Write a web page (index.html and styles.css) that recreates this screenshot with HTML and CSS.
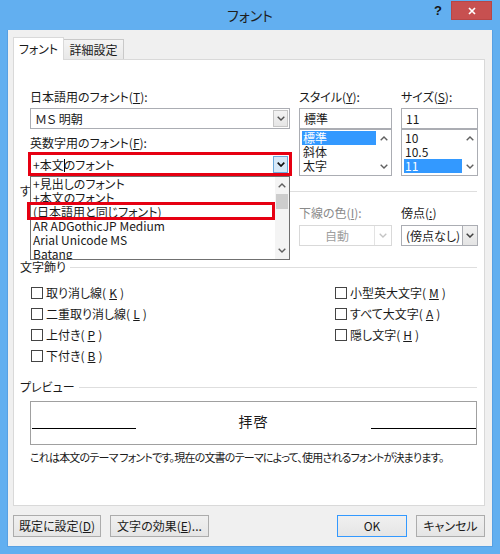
FILE: index.html
```html
<!DOCTYPE html>
<html lang="ja">
<head>
<meta charset="utf-8">
<title>フォント</title>
<link rel="stylesheet" href="styles.css">
</head>
<body>
<div class="window">
  <div class="titlebar">
    <div></div>
    <div class="title">フォント</div>
    <div class="tb-controls">
      <span class="help">?</span>
      <span class="close"><svg width="8" height="8" viewBox="0 0 8 8"><path d="M1 1 L7 7 M7 1 L1 7" stroke="#fff" stroke-width="1.7" fill="none"/></svg></span>
    </div>
  </div>
  <div class="client">
    <div class="tabs">
      <div class="tab active">フォント</div>
      <div class="tab inactive">詳細設定</div>
    </div>
    <div class="panel">
      <div class="fonts">
        <div class="col">
          <div class="lbl">日本語用のフォント(<u>T</u>):</div>
          <div class="combo">
            <div class="val">ＭＳ 明朝</div>
            <div class="arr"><svg width="8" height="5" viewBox="0 0 8 5"><polyline points="0.7,0.7 4,4 7.3,0.7" fill="none" stroke="#505050" stroke-width="1.4"/></svg></div>
          </div>
          <div class="lbl lbl2">英数字用のフォント(<u>F</u>):</div>
          <div class="combo focus">
            <div class="val">+本文<span class="caret"></span>のフォント</div>
            <div class="arr"><svg width="8" height="5" viewBox="0 0 8 5"><polyline points="0.7,0.7 4,4 7.3,0.7" fill="none" stroke="#111" stroke-width="1.7"/></svg></div>
            <div class="redmark rm1"></div>
            <div class="dropdown">
              <div class="items">
                <div class="item">+見出しのフォント</div>
                <div class="item">+本文のフォント</div>
                <div class="item">(日本語用と同じフォント)</div>
                <div class="item">AR ADGothicJP Medium</div>
                <div class="item">Arial Unicode MS</div>
                <div class="item">Batang</div>
              </div>
              <div class="sb">
                <div class="sbtn"><svg width="8" height="5" viewBox="0 0 8 5"><polyline points="0.7,4.3 4,1 7.3,4.3" fill="none" stroke="#606060" stroke-width="1.4"/></svg></div>
                <div class="thumb"></div>
                <div class="track"></div>
                <div class="sbtn"><svg width="8" height="5" viewBox="0 0 8 5"><polyline points="0.7,0.7 4,4 7.3,0.7" fill="none" stroke="#606060" stroke-width="1.4"/></svg></div>
              </div>
              <div class="redmark rm2"></div>
            </div>
          </div>
        </div>
        <div class="col">
          <div class="lbl">スタイル(<u>Y</u>):</div>
          <div class="combo"><div class="val">標準</div></div>
          <div class="list">
            <div class="litems">
              <div class="item sel">標準</div>
              <div class="item">斜体</div>
              <div class="item">太字</div>
            </div>
            <div class="sb">
              <div class="sbtn"><svg width="8" height="5" viewBox="0 0 8 5"><polyline points="0.7,4.3 4,1 7.3,4.3" fill="none" stroke="#606060" stroke-width="1.4"/></svg></div>
              <div class="track"></div>
              <div class="sbtn"><svg width="8" height="5" viewBox="0 0 8 5"><polyline points="0.7,0.7 4,4 7.3,0.7" fill="none" stroke="#606060" stroke-width="1.4"/></svg></div>
            </div>
          </div>
        </div>
        <div class="col">
          <div class="lbl">サイズ(<u>S</u>):</div>
          <div class="combo"><div class="val">11</div></div>
          <div class="list">
            <div class="litems">
              <div class="item">10</div>
              <div class="item">10.5</div>
              <div class="item sel">11</div>
            </div>
            <div class="sb">
              <div class="sbtn"><svg width="8" height="5" viewBox="0 0 8 5"><polyline points="0.7,4.3 4,1 7.3,4.3" fill="none" stroke="#606060" stroke-width="1.4"/></svg></div>
              <div class="track"></div>
              <div class="sbtn"><svg width="8" height="5" viewBox="0 0 8 5"><polyline points="0.7,0.7 4,4 7.3,0.7" fill="none" stroke="#606060" stroke-width="1.4"/></svg></div>
            </div>
          </div>
        </div>
      </div>

      <div class="group g1">すべての文字列</div>
      <div class="effects">
        <div class="cell">
          <div class="lbl">フォントの色(<u>C</u>):</div>
          <div class="combo"><div class="val">自動</div><div class="arr"></div></div>
        </div>
        <div class="cell">
          <div class="lbl">下線(<u>U</u>):</div>
          <div class="combo"><div class="val">(下線なし)</div><div class="arr"></div></div>
        </div>
        <div class="cell">
          <div class="lbl dis">下線の色(<u>I</u>):</div>
          <div class="combo disabled">
            <div class="val">自動</div>
            <div class="arr"><svg width="8" height="5" viewBox="0 0 8 5"><polyline points="0.7,0.7 4,4 7.3,0.7" fill="none" stroke="#c4c4c4" stroke-width="1.3"/></svg></div>
          </div>
        </div>
        <div class="cell">
          <div class="lbl">傍点(<u>:</u>)</div>
          <div class="combo ddl">
            <div class="val">(傍点なし)</div>
            <div class="arr"><svg width="8" height="5" viewBox="0 0 8 5"><polyline points="0.7,0.7 4,4 7.3,0.7" fill="none" stroke="#404040" stroke-width="1.5"/></svg></div>
          </div>
        </div>
      </div>

      <div class="group">文字飾り</div>
      <div class="checks">
        <div class="check"><span class="box"></span>取り消し線(<u>K</u>)</div>
        <div class="check"><span class="box"></span>二重取り消し線(<u>L</u>)</div>
        <div class="check"><span class="box"></span>上付き(<u>P</u>)</div>
        <div class="check"><span class="box"></span>下付き(<u>B</u>)</div>
        <div class="check"><span class="box"></span>小型英大文字(<u>M</u>)</div>
        <div class="check"><span class="box"></span>すべて大文字(<u>A</u>)</div>
        <div class="check"><span class="box"></span>隠し文字(<u>H</u>)</div>
      </div>

      <div class="group">プレビュー</div>
      <div class="preview">
        <div class="pline"></div>
        <div class="ptext">拝啓</div>
        <div class="pline"></div>
      </div>
      <p class="desc">これは本文のテーマ フォントです。現在の文書のテーマによって、使用されるフォントが決まります。</p>
    </div>
    <div class="buttons">
      <div class="btn b1">既定に設定(<u>D</u>)</div>
      <div class="btn b2">文字の効果(<u>E</u>)...</div>
      <div class="btn ok">OK</div>
      <div class="btn cancel">キャンセル</div>
    </div>
  </div>
</div>
</body>
</html>
```
FILE: styles.css
```css
* { box-sizing: border-box; }
html, body { margin: 0; padding: 0; }
body {
  width: 500px;
  height: 554px;
  overflow: hidden;
  font-family: "Noto Sans CJK JP", "Noto Sans CJK SC", sans-serif;
  font-size: 12px;
  color: #1a1a1a;
  font-feature-settings: "palt";
}
u { text-decoration: underline; text-underline-offset: 1px; }

.window {
  width: 500px;
  height: 554px;
  background: #62aff0;
  padding: 0 7px 7px 7px;
  display: flex;
  flex-direction: column;
}

.titlebar {
  height: 30px;
  flex: none;
  display: grid;
  grid-template-columns: 1fr auto 1fr;
}
.title { font-size: 14px; line-height: 30px; color: #1e1e1e; }
.tb-controls { justify-self: end; display: flex; align-items: flex-start; }
.help {
  width: 16px;
  margin-right: 5px;
  margin-top: 4px;
  text-align: center;
  font-family: "Liberation Sans", sans-serif;
  font-weight: bold;
  font-size: 13px;
  line-height: 14px;
  color: #151515;
}
.close {
  width: 41px;
  height: 19px;
  margin-top: 1px;
  margin-right: 1px;
  background: #c75050;
  border: 1px solid #b84646;
  display: flex;
  align-items: center;
  justify-content: center;
}

.client {
  flex: 1;
  background: #f0f0f0;
  border: 1px solid #57a0e3;
  border-top: none;
  padding: 7px 7px 0 5px;
  display: flex;
  flex-direction: column;
}

.tabs {
  display: flex;
  align-items: flex-end;
  height: 22px;
  flex: none;
  position: relative;
  z-index: 1;
}
.tab {
  height: 20px;
  border: 1px solid #c9c9c9;
  border-bottom: none;
  background: linear-gradient(#f4f4f4, #e8e8e8);
  line-height: 19px;
  text-align: center;
}
.tab.active {
  width: 51px;
  height: 23px;
  margin-bottom: -1px;
  background: #fff;
  border-color: #d9d9d9;
  line-height: 22px;
}
.tab.inactive { width: 60px; border-left: none; }

.panel {
  height: 447px;
  flex: none;
  background: #fff;
  border: 1px solid #d9d9d9;
  padding: 30px 7px 0 16px;
}

.fonts {
  display: grid;
  grid-template-columns: 260px 93px 77px;
  column-gap: 9px;
  align-items: start;
}
.lbl { line-height: 14px; height: 14px; white-space: nowrap; }
.lbl2 { margin-top: 7px; }
.lbl.dis { color: #8a8a8a; }

.combo {
  height: 21px;
  margin-top: 4px;
  border: 1px solid #abadb3;
  background: #fff;
  display: flex;
  position: relative;
}
.combo .val { flex: 1; line-height: 19px; padding-left: 4px; white-space: nowrap; overflow: hidden; }
.combo .arr {
  width: 15px;
  margin: 1px;
  border: 1px solid #c6c6c6;
  background: linear-gradient(#f3f3f3, #e6e6e6);
  display: flex;
  align-items: center;
  justify-content: center;
}
.combo.focus .val { padding-left: 2px; }
.combo.focus .arr { background: #d7e9f8; border-color: #6aa9dc; }
.caret {
  display: inline-block;
  width: 0;
  height: 13px;
  border-left: 1px solid #000;
  vertical-align: -2px;
  margin: 0 -1px 0 0;
}

.redmark { position: absolute; border: 3px solid #e60012; pointer-events: none; }
.rm1 { left: -3px; top: -3px; width: 264px; height: 24px; z-index: 3; }
.rm2 { left: -4px; top: 25px; width: 248px; height: 18px; z-index: 3; }

.dropdown {
  position: absolute;
  left: -1px;
  top: 21px;
  width: 260px;
  height: 84px;
  border: 1px solid #707070;
  background: #fff;
  display: flex;
  z-index: 2;
}
.items { flex: 1; overflow: hidden; padding-left: 2px; }
.item { height: 14px; line-height: 14px; white-space: nowrap; }

.sb { width: 14px; display: flex; flex-direction: column; background: #f4f4f4; }
.sbtn { height: 17px; flex: none; display: flex; align-items: center; justify-content: center; }
.thumb { height: 15px; flex: none; margin: 0 1px; background: #cdcdcd; }
.track { flex: 1; }

.list {
  height: 47px;
  border: 1px solid #abadb3;
  background: #fff;
  display: flex;
}
.litems { flex: 1; padding: 1px 1px 0 2px; }
.litems .item { padding-left: 1px; }
.item.sel { background: #3399ff; color: #fff; }
.list .sb { background: #fff; }

.group {
  display: flex;
  align-items: center;
  margin-left: -10px;
  height: 14px;
  line-height: 14px;
  white-space: nowrap;
}
.group::after {
  content: "";
  flex: 1;
  border-top: 1px solid #dedede;
  margin-left: 4px;
}
.g1 { margin-top: 8px; }

.effects {
  display: grid;
  grid-template-columns: 126px 125px 93px 77px;
  column-gap: 9px;
  margin-top: 8px;
  margin-bottom: 14px;
}
.effects .combo { margin-top: 5px; }
.combo.disabled { border-color: #d9d9d9; }
.combo.disabled .val { text-align: center; color: #a0a0a0; padding-left: 0; }
.combo.disabled .arr { margin: 0; border: none; border-left: 1px solid #e3e3e3; background: #fff; width: 17px; }
.combo.ddl .arr { margin: 0; border: none; border-left: 1px solid #abadb3; background: linear-gradient(#f2f2f2, #e4e4e4); width: 15px; }

.checks {
  display: grid;
  grid-template-columns: 304px 1fr;
  grid-template-rows: repeat(4, 21px);
  grid-auto-flow: column;
  margin-top: 8px;
  margin-left: 1px;
  margin-bottom: 14px;
}
.check { display: flex; align-items: center; gap: 3px; white-space: nowrap; }
.box { width: 12px; height: 12px; border: 1px solid #444; background: #fff; flex: none; }

.preview {
  height: 44px;
  margin-top: 7px;
  border: 1px solid #a0a0a0;
  display: grid;
  grid-template-columns: 104px 1fr 105px;
  padding-left: 1px;
  align-items: start;
}
.pline { margin-top: 26px; border-top: 1px solid #000; height: 0; }
.ptext { text-align: center; font-size: 14px; line-height: 20px; margin-top: 9px; letter-spacing: 1px; }

.desc {
  margin: 5px 0 0 0;
  line-height: 14px;
  font-size: 11px;
  letter-spacing: -0.8px;
  white-space: nowrap;
}

.buttons { display: flex; gap: 9px; margin-top: 9px; height: 22px; flex: none; }
.btn {
  height: 22px;
  border: 1px solid #acacac;
  background: linear-gradient(#f0f0f0, #e5e5e5);
  line-height: 20px;
  text-align: center;
  white-space: nowrap;
}
.b1 { width: 88px; }
.b2 { width: 99px; }
.ok { width: 70px; margin-left: auto; border-color: #3399ff; }
.cancel { width: 69px; }
```
